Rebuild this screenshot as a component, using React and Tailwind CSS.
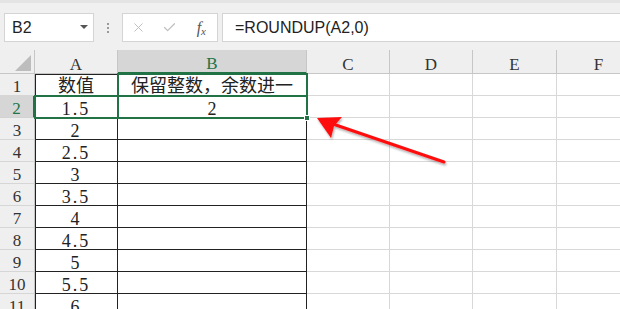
import { X, Check } from "lucide-react";

const cols = ["A", "B", "C", "D", "E", "F"];
const values = ["数值", "1.5", "2", "2.5", "3", "3.5", "4", "4.5", "5", "5.5", "6"];

const HeaderCell = ({ label, active }) => (
  <div
    className={
      active
        ? "bg-[#d6d6d6] border-r border-b-2 border-r-[#c6c6c6] border-b-[#217346] text-[#217346] flex items-end justify-center text-[17px] leading-[16px]"
        : "bg-[#efefef] border-r border-b border-[#c6c6c6] text-[#333] flex items-end justify-center text-[17px] leading-[16px]"
    }
  >
    {label}
  </div>
);

const RowHeader = ({ n, active }) => (
  <div
    className={
      active
        ? "bg-[#d6d6d6] border-r-2 border-b border-r-[#217346] border-b-[#d2d2d2] text-[#217346] flex items-end justify-center text-[17px] leading-[14px] pb-[1px]"
        : "bg-[#efefef] border-r border-b border-r-[#c6c6c6] border-b-[#d6d6d6] text-[#333] flex items-end justify-center text-[17px] leading-[14px] pb-[1px]"
    }
  >
    {n}
  </div>
);

export default function App() {
  return (
    <div className="w-[620px] h-[309px] overflow-hidden bg-white relative font-['Liberation_Serif','Noto_Sans_CJK_SC',serif]">
      {/* formula bar */}
      <div className="h-[50px] bg-[#f0f0f0] border-t-[3px] border-[#e4e4e4] flex items-start pt-[10px] pl-[4px] font-['Liberation_Sans',sans-serif]">
        <div className="w-[90px] h-[29px] bg-white border border-[#d4d4d4] flex items-center justify-between pl-[7px] pr-[5px] text-[16px] text-[#222]">
          <span>B2</span>
          <svg width="8" height="5" viewBox="0 0 8 5">
            <polygon points="0,0 8,0 4,4" fill="#555" />
          </svg>
        </div>
        <div className="w-[28px] h-[29px] flex flex-col items-center justify-center gap-[2px]">
          <div className="w-[2px] h-[2px] bg-[#9a9a9a]" />
          <div className="w-[2px] h-[2px] bg-[#9a9a9a]" />
          <div className="w-[2px] h-[2px] bg-[#9a9a9a]" />
        </div>
        <div className="w-[96px] h-[29px] bg-white border border-[#d4d4d4] flex items-center">
          <div className="w-[32px] flex justify-center">
            <X size={15} strokeWidth={1.5} color="#bcbcbc" />
          </div>
          <div className="w-[32px] flex justify-center">
            <Check size={15} strokeWidth={1.8} color="#bcbcbc" />
          </div>
          <div className="w-[32px] flex justify-center items-end text-[#555] italic font-['Liberation_Serif',serif] text-[16px] leading-[16px]">
            <span>f</span>
            <span className="text-[11px] leading-[11px] relative top-[1px]">x</span>
          </div>
        </div>
        <div className="ml-[4px] flex-1 h-[29px] bg-white border border-r-0 border-[#d4d4d4] flex items-center pl-[12px] text-[16px] text-[#222]">
          =ROUNDUP(A2,0)
        </div>
      </div>

      {/* sheet grid */}
      <div className="relative grid grid-cols-[35px_83px_189px_83px_83px_84px_84px] grid-rows-[24px_repeat(11,22px)]">
        <div className="bg-[#efefef] border-r border-b border-[#c6c6c6] flex items-end justify-end pr-[2px] pb-[1px]">
          <svg width="17" height="17" viewBox="0 0 17 17">
            <polygon points="16,0 16,16 0,16" fill="#bdbdbd" />
          </svg>
        </div>
        {cols.map((c) => (
          <HeaderCell key={c} label={c} active={c === "B"} />
        ))}

        {values.map((v, i) => (
          <div key={i} className="contents">
            <RowHeader n={i + 1} active={i === 1} />
            <div
              className={
                i === 0
                  ? "border-r border-b border-[#222] shadow-[inset_1px_1px_0_#222] flex items-end justify-center text-[18px] leading-[18px] text-[#222]"
                  : "border-r border-b border-[#222] shadow-[inset_1px_0_0_#222] flex items-end justify-center text-[18px] leading-[15px] tracking-[2px] text-[#222]"
              }
            >
              {v}
            </div>
            <div
              className={
                i === 0
                  ? "border-r border-b border-[#222] shadow-[inset_0_1px_0_#222] flex items-end justify-center text-[18px] leading-[18px] text-[#222]"
                  : "border-r border-b border-[#222] flex items-end justify-center text-[18px] leading-[15px] text-[#222]"
              }
            >
              {i === 0 ? "保留整数，余数进一" : i === 1 ? "2" : ""}
            </div>
            <div className="border-r border-b border-[#d8d8d8]" />
            <div className="border-r border-b border-[#d8d8d8]" />
            <div className="border-r border-b border-[#d8d8d8]" />
            <div className="border-r border-b border-[#d8d8d8]" />
          </div>
        ))}

        {/* selection outlines */}
        <div className="absolute left-[34px] top-[45px] w-[85px] h-[24px] border-2 border-[#217346] pointer-events-none" />
        <div className="absolute left-[117px] top-[23px] w-[191px] h-[24px] border-2 border-[#217346] pointer-events-none" />
        <div className="absolute left-[117px] top-[45px] w-[191px] h-[24px] border-2 border-[#217346] pointer-events-none" />
        <div className="absolute left-[304px] top-[65px] w-[6px] h-[6px] bg-[#217346] border border-white pointer-events-none" />
      </div>

      {/* annotation arrow */}
      <svg className="absolute left-0 top-0 pointer-events-none" width="620" height="309" viewBox="0 0 620 309">
        <defs>
          <filter id="sh" x="-10%" y="-10%" width="130%" height="140%">
            <feDropShadow dx="1" dy="2" stdDeviation="1.2" floodColor="#000" floodOpacity="0.3" />
          </filter>
        </defs>
        <g filter="url(#sh)">
          <line x1="444" y1="162" x2="330" y2="123" stroke="#ff1010" strokeWidth="3" strokeLinecap="round" />
          <polygon points="317,118 342,117 334,126 331,138" fill="#ff1010" />
        </g>
      </svg>
    </div>
  );
}
